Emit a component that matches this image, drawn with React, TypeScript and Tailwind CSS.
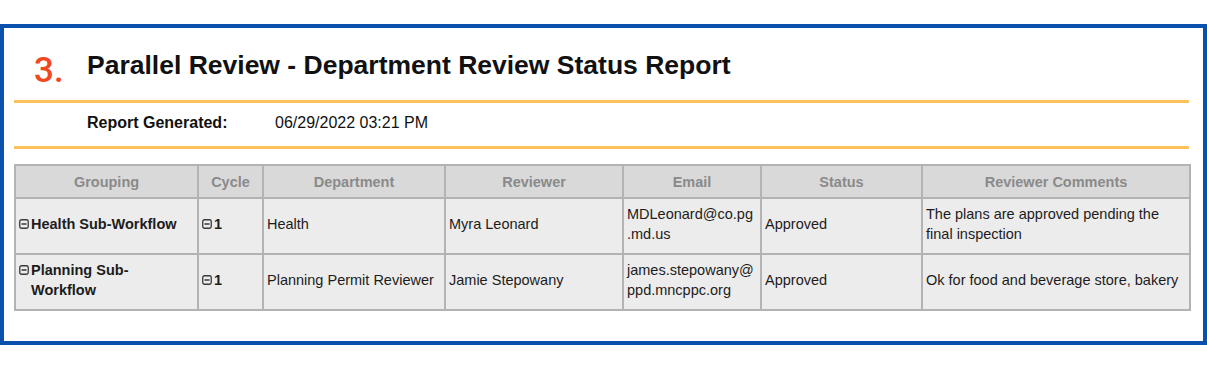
import React from 'react';

const font = { fontFamily: '"Liberation Sans", Arial, sans-serif' };

function BoxMinus() {
  return (
    <svg className="w-[10px] h-[10px] shrink-0 mr-[2px]" viewBox="0 0 10 10" fill="none">
      <rect x="0.75" y="0.75" width="8.5" height="8.5" rx="1.8" stroke="#3a3a3a" strokeWidth="1.3" />
      <path d="M2.5 5h5" stroke="#2a2a2a" strokeWidth="1.4" />
    </svg>
  );
}

const headers = ['Grouping', 'Cycle', 'Department', 'Reviewer', 'Email', 'Status', 'Reviewer Comments'];
const widths = ['w-[183px]', 'w-[65px]', 'w-[182px]', 'w-[178px]', 'w-[138px]', 'w-[161px]', 'w-[268px]'];

const rows = [
  {
    group: ['Health Sub-Workflow'],
    dept: 'Health',
    reviewer: 'Myra Leonard',
    email: ['MDLeonard@co.pg', '.md.us'],
    status: 'Approved',
    comments: ['The plans are approved pending the', 'final inspection'],
  },
  {
    group: ['Planning Sub-', 'Workflow'],
    dept: 'Planning Permit Reviewer',
    reviewer: 'Jamie Stepowany',
    email: ['james.stepowany@', 'ppd.mncppc.org'],
    status: 'Approved',
    comments: ['Ok for food and beverage store, bakery'],
  },
];

function Lines({ lines }: { lines: string[] }) {
  return (
    <>
      {lines.map((l, i) => (
        <React.Fragment key={i}>
          {i > 0 && <br />}
          {l}
        </React.Fragment>
      ))}
    </>
  );
}

export default function App() {
  return (
    <div className="w-[1207px] h-[370px] bg-white pt-[24px]" style={font}>
      <div className="h-[321px] border-4 border-[#0a51ad] pt-[22px] pl-[10px] pr-[14px]">
        {/* title */}
        <div className="flex items-start h-[50px]">
          <span
            className="w-[73px] pl-[20px] text-[35px] font-medium leading-[1.2] text-[#f0481f]"
            style={{ fontFamily: 'Roboto, "Liberation Sans", sans-serif' }}
          >
            3.
          </span>
          <h1 className="text-[26.5px] font-bold leading-[1.2] text-[#111]">
            Parallel Review - Department Review Status Report
          </h1>
        </div>
        <div className="h-[3px] bg-[#fdc35a]" />
        <div className="h-[43px] flex items-center pl-[73px] text-[16px] text-[#111] pb-[4px]">
          <span className="w-[188px] font-bold">Report Generated:</span>
          <span>06/29/2022 03:21 PM</span>
        </div>
        <div className="h-[3px] bg-[#fdc35a]" />

        {/* table */}
        <table className="mt-[15px] w-[1175px] table-fixed border-collapse border-2 border-[#b3b3b3] text-[14.5px] leading-[20px]">
          <colgroup>
            {widths.map((w, i) => (
              <col key={i} className={w} />
            ))}
          </colgroup>
          <thead>
            <tr className="h-[33px] bg-[#d9d9d9]">
              {headers.map((h) => (
                <th key={h} className="border-2 border-[#b3b3b3] font-bold text-[#8a8a8a] text-center align-middle">
                  {h}
                </th>
              ))}
            </tr>
          </thead>
          <tbody>
            {rows.map((r, i) => (
              <tr key={i} className="h-[56px] bg-[#ececec] text-[#1c1c1c]">
                <td className="border-2 border-[#b3b3b3] px-[3px] pb-[4px] align-middle font-bold">
                  <div className="flex items-start">
                    <span className="h-[20px] flex items-center">
                      <BoxMinus />
                    </span>
                    <span>
                      <Lines lines={r.group} />
                    </span>
                  </div>
                </td>
                <td className="border-2 border-[#b3b3b3] px-[3px] pb-[4px] align-middle font-bold">
                  <div className="flex items-center">
                    <BoxMinus />
                    <span>1</span>
                  </div>
                </td>
                <td className="border-2 border-[#b3b3b3] px-[3px] pb-[4px] align-middle">{r.dept}</td>
                <td className="border-2 border-[#b3b3b3] px-[3px] pb-[4px] align-middle">{r.reviewer}</td>
                <td className="border-2 border-[#b3b3b3] px-[3px] pb-[4px] align-middle">
                  <Lines lines={r.email} />
                </td>
                <td className="border-2 border-[#b3b3b3] px-[3px] pb-[4px] align-middle">{r.status}</td>
                <td className="border-2 border-[#b3b3b3] px-[3px] pb-[4px] align-middle whitespace-nowrap">
                  <Lines lines={r.comments} />
                </td>
              </tr>
            ))}
          </tbody>
        </table>
      </div>
    </div>
  );
}
